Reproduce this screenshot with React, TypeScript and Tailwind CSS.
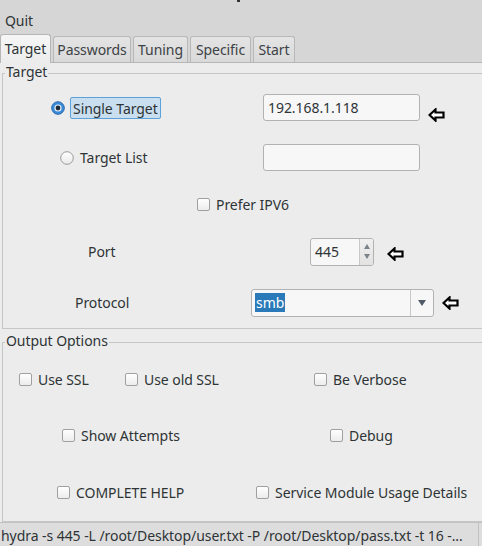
import React from 'react';

const tabs = [
  { label: 'Target', w: 'w-[51px]', active: true },
  { label: 'Passwords', w: 'w-[78px]' },
  { label: 'Tuning', w: 'w-[55px]' },
  { label: 'Specific', w: 'w-[61px]' },
  { label: 'Start', w: 'w-[42px]' },
];

function Arrow() {
  return (
    <svg width="17" height="14" viewBox="0 0 17 14" className="shrink-0">
      <polygon
        points="1.5,7 7.5,1.5 7.5,4.5 15.5,4.5 15.5,9.5 7.5,9.5 7.5,12.5"
        fill="#ffffff"
        stroke="#000"
        strokeWidth="2.2"
        strokeLinejoin="miter"
      />
    </svg>
  );
}

function Check({ label }: { label: string }) {
  return (
    <div className="flex items-center gap-[6px]">
      <span className="w-[13px] h-[13px] shrink-0 rounded-[2px] border border-[#a0a0a0] bg-gradient-to-b from-white to-[#ececec]" />
      <span>{label}</span>
    </div>
  );
}

function Radio({ on }: { on?: boolean }) {
  return on ? (
    <svg width="14" height="14" viewBox="0 0 14 14" className="shrink-0">
      <circle cx="7" cy="7" r="6.3" fill="#3b8ad6" stroke="#2a6cb0" strokeWidth="1" />
      <circle cx="7" cy="7" r="3.6" fill="#e8f1fa" />
      <circle cx="7" cy="7" r="2.4" fill="#1f2a36" />
    </svg>
  ) : (
    <svg width="14" height="14" viewBox="0 0 14 14" className="shrink-0">
      <defs>
        <linearGradient id="rg" x1="0" y1="0" x2="0" y2="1">
          <stop offset="0" stopColor="#ffffff" />
          <stop offset="1" stopColor="#e9e9e9" />
        </linearGradient>
      </defs>
      <circle cx="7" cy="7" r="6.3" fill="url(#rg)" stroke="#9a9a9a" strokeWidth="1" />
    </svg>
  );
}

function GroupBox({ title, className, children }: { title: string; className: string; children: React.ReactNode }) {
  return (
    <div className={`relative ml-[2px] w-[484px] border border-[#c6c6c6] ${className}`}>
      <span className="absolute -top-[11px] left-[2px] px-[1px] bg-[#ececec] leading-[18px]">{title}</span>
      {children}
    </div>
  );
}

export default function App() {
  return (
    <div
      className="relative w-[482px] h-[546px] overflow-hidden bg-[#ececec] text-[14px] text-[#2e3436] tracking-[-0.06px]"
      style={{ fontFamily: '"Noto Sans", "Open Sans", sans-serif' }}
    >
      <span className="absolute left-[237px] top-0 w-[3px] h-[2px] bg-[#333]" />

      {/* menu + tabs */}
      <div className="h-[62px] bg-[#d6d6d6] flex flex-col">
        <div className="h-[34px] pl-[5px] pt-[11px] leading-[20px]">Quit</div>
        <div className="flex items-end gap-[2px] h-[28px]">
          {tabs.map((t) =>
            t.active ? (
              <div
                key={t.label}
                className={`${t.w} h-[29px] -mb-px relative z-10 flex items-center justify-center rounded-t-[3px] border border-b-0 border-[#b6b6b6] bg-gradient-to-b from-[#f6f6f6] to-[#ececec] pb-[2px]`}
              >
                {t.label}
              </div>
            ) : (
              <div
                key={t.label}
                className={`${t.w} h-[26px] flex items-center justify-center rounded-t-[3px] border border-b-0 border-[#b8b8b8] bg-gradient-to-b from-[#e4e4e4] to-[#d9d9d9] text-[#3c4245]`}
              >
                {t.label}
              </div>
            )
          )}
        </div>
      </div>

      {/* pane */}
      <div className="border-t border-[#b6b6b6] pt-[10px]">
        <GroupBox title="Target" className="pt-[20px] pb-[12px]">
          <div className="grid grid-cols-[260px_157px_auto] h-[27px]">
            <div className="flex items-center pl-[48px] gap-[5px]">
              <Radio on />
              <span className="h-[22px] px-[2px] flex items-center rounded-[2px] border border-[#5aa2d9] bg-[#c9deee]">Single Target</span>
            </div>
            <div className="h-[27px] rounded-[3px] border border-[#b2b2b2] bg-[#f7f7f7] flex items-center pl-[4px]">192.168.1.118</div>
            <div className="pl-[8px] pt-[14px]">
              <Arrow />
            </div>
          </div>

          <div className="grid grid-cols-[260px_157px_auto] h-[27px] mt-[23px]">
            <div className="flex items-center pl-[57px] gap-[6px]">
              <Radio />
              <span>Target List</span>
            </div>
            <div className="h-[27px] rounded-[3px] border border-[#b2b2b2] bg-[#f7f7f7]" />
          </div>

          <div className="h-[26px] mt-[20px] flex items-center pl-[194px]">
            <Check label="Prefer IPV6" />
          </div>

          <div className="h-[27px] mt-[21px] flex items-center">
            <span className="w-[307px] pl-[85px]">Port</span>
            <div className="w-[64px] h-[28px] rounded-[3px] border border-[#b2b2b2] bg-[#f7f7f7] flex">
              <span className="flex-1 flex items-center pl-[4px]">445</span>
              <div className="w-[14px] border-l border-[#c8c8c8] bg-gradient-to-b from-[#f0f0f0] to-[#e2e2e2] rounded-r-[2px] flex flex-col items-center justify-center gap-[5px]">
                <svg width="6" height="5" viewBox="0 0 6 5"><polygon points="3,0 6,5 0,5" fill="#7b8288" /></svg>
                <svg width="6" height="5" viewBox="0 0 6 5"><polygon points="0,0 6,0 3,5" fill="#7b8288" /></svg>
              </div>
            </div>
            <div className="pl-[13px] pt-[5px]">
              <Arrow />
            </div>
          </div>

          <div className="h-[27px] mt-[24px] flex items-center">
            <span className="w-[248px] pl-[72px]">Protocol</span>
            <div className="w-[183px] h-[28px] rounded-[3px] border border-[#b2b2b2] bg-[#f7f7f7] flex">
              <div className="flex-1 flex items-center pl-[3px]">
                <span className="bg-[#2a7ab9] text-white leading-[19px] px-[1px]">smb</span>
              </div>
              <div className="w-[23px] border-l border-[#c8c8c8] flex items-center justify-center">
                <svg width="8" height="6" viewBox="0 0 8 6"><polygon points="0,0 8,0 4,6" fill="#4f5b66" /></svg>
              </div>
            </div>
            <div className="pl-[8px]">
              <Arrow />
            </div>
          </div>
        </GroupBox>

        <GroupBox title="Output Options" className="mt-[13px] pt-[23px] pb-[16px]">
          <div className="h-[26px] flex items-center pl-[16px]">
            <div className="w-[106px]"><Check label="Use SSL" /></div>
            <div className="w-[189px]"><Check label="Use old SSL" /></div>
            <Check label="Be Verbose" />
          </div>
          <div className="h-[26px] mt-[30px] flex items-center pl-[59px]">
            <div className="w-[268px]"><Check label="Show Attempts" /></div>
            <Check label="Debug" />
          </div>
          <div className="h-[26px] mt-[31px] flex items-center pl-[54px]">
            <div className="w-[199px]"><Check label="COMPLETE HELP" /></div>
            <Check label="Service Module Usage Details" />
          </div>
        </GroupBox>

        {/* status bar */}
        <div className="h-[24px] border-t border-[#c2c2c2] bg-[#dddddd] flex items-center">
          <span className="w-[479px] pl-[1px] pt-[2px] whitespace-nowrap overflow-hidden border-r border-[#c2c2c2] h-full flex items-center">
            hydra -s 445 -L /root/Desktop/user.txt -P /root/Desktop/pass.txt -t 16 -...
          </span>
        </div>
      </div>
    </div>
  );
}
